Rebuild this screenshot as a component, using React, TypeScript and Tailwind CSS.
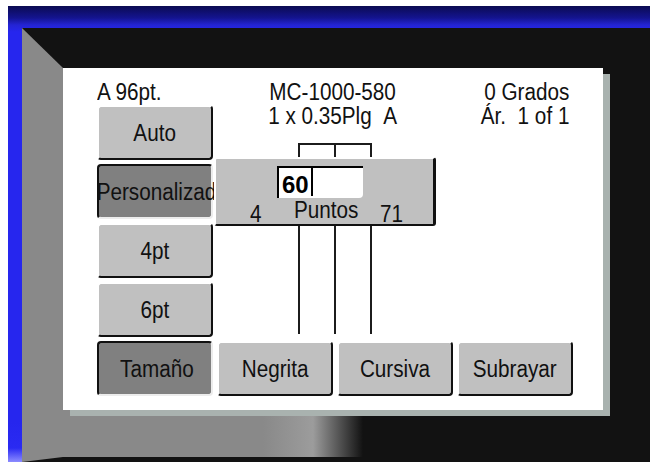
const font = "font-['Liberation_Sans',Arial,sans-serif]";

function Btn({ label, pressed }: { label: string; pressed?: boolean }) {
  const base = "flex h-[55px] w-[116px] shrink-0 items-center justify-center rounded-[4px] border-2";
  const look = pressed
    ? "bg-[#808080] border-t-[#111] border-l-[#111] border-r-[#ececec] border-b-[#ececec] pl-[3px]"
    : "bg-[#c0c0c0] border-t-white border-l-white border-r-[#111] border-b-[#111]";
  return (
    <div className={`${base} ${look}`}>
      <span className="scale-x-90 whitespace-nowrap">{label}</span>
    </div>
  );
}

export default function App() {
  return (
    <div className="h-[462px] w-[650px] overflow-hidden bg-white pl-[8px] pt-[6px]">
      {/* blue bezel */}
      <div className="h-[456px] bg-[linear-gradient(to_top,#8c8cff_0px,#2a2af2_14px,transparent_40px),linear-gradient(to_bottom,#0b0b52_0px,#141490_12px,#2424d4_19px,#2626ee_26px)] pl-[14px] pt-[22px]">
        {/* screen with perspective walls */}
        <div className="h-[434px] w-[628px] border-b-[5px] border-l-[41px] border-t-[40px] border-b-[#121212] border-l-[#898989] border-t-[#121212] bg-[#121212] bg-[linear-gradient(to_right,#898989_200px,#9c9c9c_250px,#121212_300px)] bg-[length:100%_47px] bg-bottom bg-no-repeat pr-[47px]">
          <div className={`relative h-[342px] w-[540px] bg-white pl-[34px] pr-[34px] pt-[12px] shadow-[7px_6px_0_#a9b2af] ${font} text-[23px] leading-[24px] text-[#111]`}>
            <div className="grid grid-cols-[1fr_auto_1fr] items-start">
              <div>
                <div className="origin-left scale-x-90 whitespace-nowrap">A 96pt.</div>
                <div className="mt-[1px] flex flex-col gap-[4px]">
                  <Btn label="Auto" />
                  <Btn label="Personalizad" pressed />
                  <Btn label="4pt" />
                  <Btn label="6pt" />
                </div>
              </div>
              <div className="origin-center scale-x-90 whitespace-nowrap text-center">
                MC-1000-580
                <br />
                1 x 0.35Plg&nbsp;&nbsp;A
              </div>
              <div className="origin-right scale-x-90 whitespace-nowrap text-right">
                0 Grados
                <br />
                Ár.&nbsp;&nbsp;1 of 1
              </div>
            </div>

            <div className="mt-[4px] flex gap-[4px]">
              <Btn label="Tamaño" pressed />
              <Btn label="Negrita" />
              <Btn label="Cursiva" />
              <Btn label="Subrayar" />
            </div>

            {/* bracket guide lines */}
            <svg className="absolute left-[235px] top-[75px]" width="76" height="192" viewBox="0 0 76 192">
              <path d="M1 0V191M37 0V191M73 0V191M0 1H74" stroke="#1c1c1c" strokeWidth="2" fill="none" />
            </svg>

            {/* size entry popup */}
            <div className="absolute left-[151px] top-[89px] h-[69px] w-[222px] overflow-hidden rounded-[3px] border-b-2 border-l-2 border-r-[3px] border-t-2 border-b-[#111] border-l-white border-r-[#111] border-t-white bg-[#c0c0c0]">
              <div className="ml-[61px] mt-[7px] flex h-[32px] w-[86px] items-start rounded-br-[4px] border-l-2 border-t-2 border-black bg-white pl-[3px]">
                <span className="pt-[3px] text-[24px] font-bold leading-[28px] text-black">60</span>
                <span className="ml-[2px] h-[28px] w-[2px] bg-black" />
              </div>
              <div className="flex items-end whitespace-nowrap">
                <span className="ml-[34px] origin-left scale-x-90">4</span>
                <span className="mb-[4px] ml-[31px] origin-left scale-x-90">Puntos</span>
                <span className="ml-[15px] origin-left scale-x-90">71</span>
              </div>
            </div>
          </div>
        </div>
      </div>
    </div>
  );
}
